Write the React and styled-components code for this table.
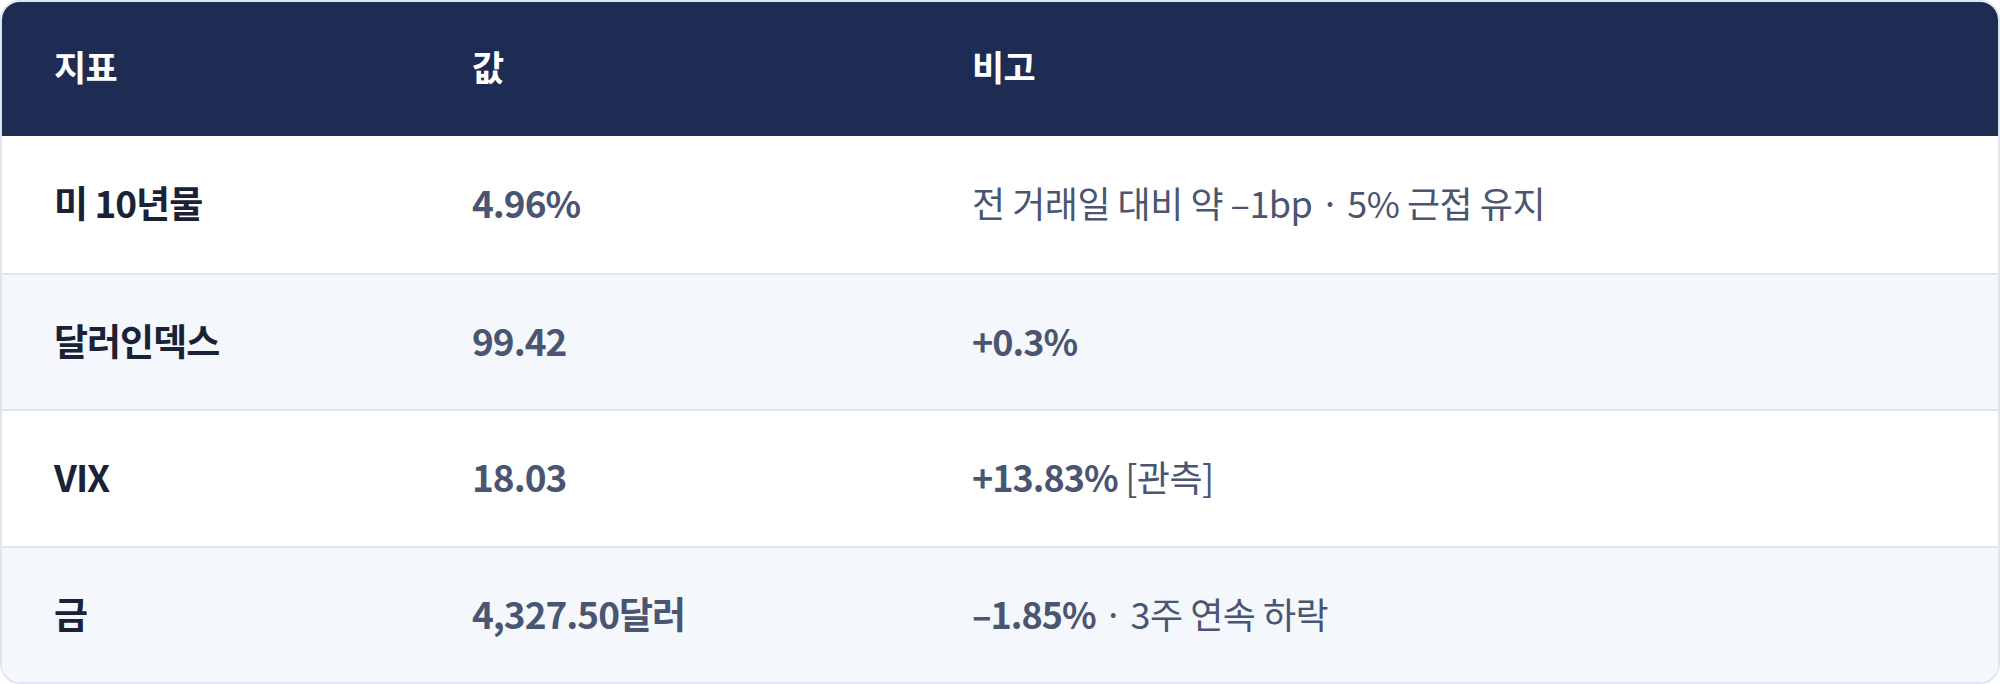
import React from 'react';
import styled, {createGlobalStyle} from 'styled-components';

const GlobalStyle = createGlobalStyle`
    html, body {
        margin: 0;
        padding: 0;
        background: #ffffff;
    }
    body {
        font-family: "Noto Sans CJK KR", "Noto Sans", sans-serif;
    }
`;

const Card = styled.div`
    box-sizing: border-box;
    width: 100%;
    height: 684px;
    border: 2px solid #dfe5f1;
    border-radius: 20px;
    overflow: hidden;
    display: grid;
    grid-template-rows: 134px repeat(4, 1fr);
`;

const Row = styled.div`
    display: grid;
    grid-template-columns: 418px 500px 1fr;
    align-items: center;
    padding-bottom: 4px;
    background: ${(props) => props.$bg};
    border-top: ${(props) => (props.$first ? 'none' : '2px solid #dfe5f1')};
`;

const HeaderRow = styled(Row)`
    background: #1e2b53;
    border-top: none;
    padding-bottom: 8px;
`;

const HeadCell = styled.div`
    padding-left: 52px;
    color: #ffffff;
    font-size: 35px;
    font-weight: 700;
    letter-spacing: -0.8px;
`;

const NameCell = styled.div`
    padding-left: 52px;
    color: #1b2236;
    font-size: 37px;
    font-weight: 700;
    letter-spacing: -1px;
`;

const ValueCell = styled(NameCell)`
    color: #4a5571;
`;

const NoteCell = styled.div`
    padding-left: 52px;
    color: #4a5571;
    font-size: 36px;
    font-weight: 400;
    letter-spacing: -0.5px;

    strong {
        font-weight: 700;
        letter-spacing: -1px;
    }
`;

const rows = [
    {name: '미 10년물', value: '4.96%', bold: '', note: '전 거래일 대비 약 –1bp · 5% 근접 유지'},
    {name: '달러인덱스', value: '99.42', bold: '+0.3%', note: ''},
    {name: 'VIX', value: '18.03', bold: '+13.83%', note: ' [관측]'},
    {name: '금', value: '4,327.50달러', bold: '–1.85%', note: ' · 3주 연속 하락'},
];

function App() {
    return (
        <>
            <GlobalStyle/>
            <Card>
                <HeaderRow>
                    <HeadCell>지표</HeadCell>
                    <HeadCell>값</HeadCell>
                    <HeadCell>비고</HeadCell>
                </HeaderRow>
                {rows.map((r, i) => (
                    <Row key={r.name} $first={i === 0} $bg={i % 2 === 0 ? '#ffffff' : '#f4f7fc'}>
                        <NameCell>{r.name}</NameCell>
                        <ValueCell>{r.value}</ValueCell>
                        <NoteCell>
                            {r.bold && <strong>{r.bold}</strong>}
                            {r.note}
                        </NoteCell>
                    </Row>
                ))}
            </Card>
        </>
    );
}

export default App;
